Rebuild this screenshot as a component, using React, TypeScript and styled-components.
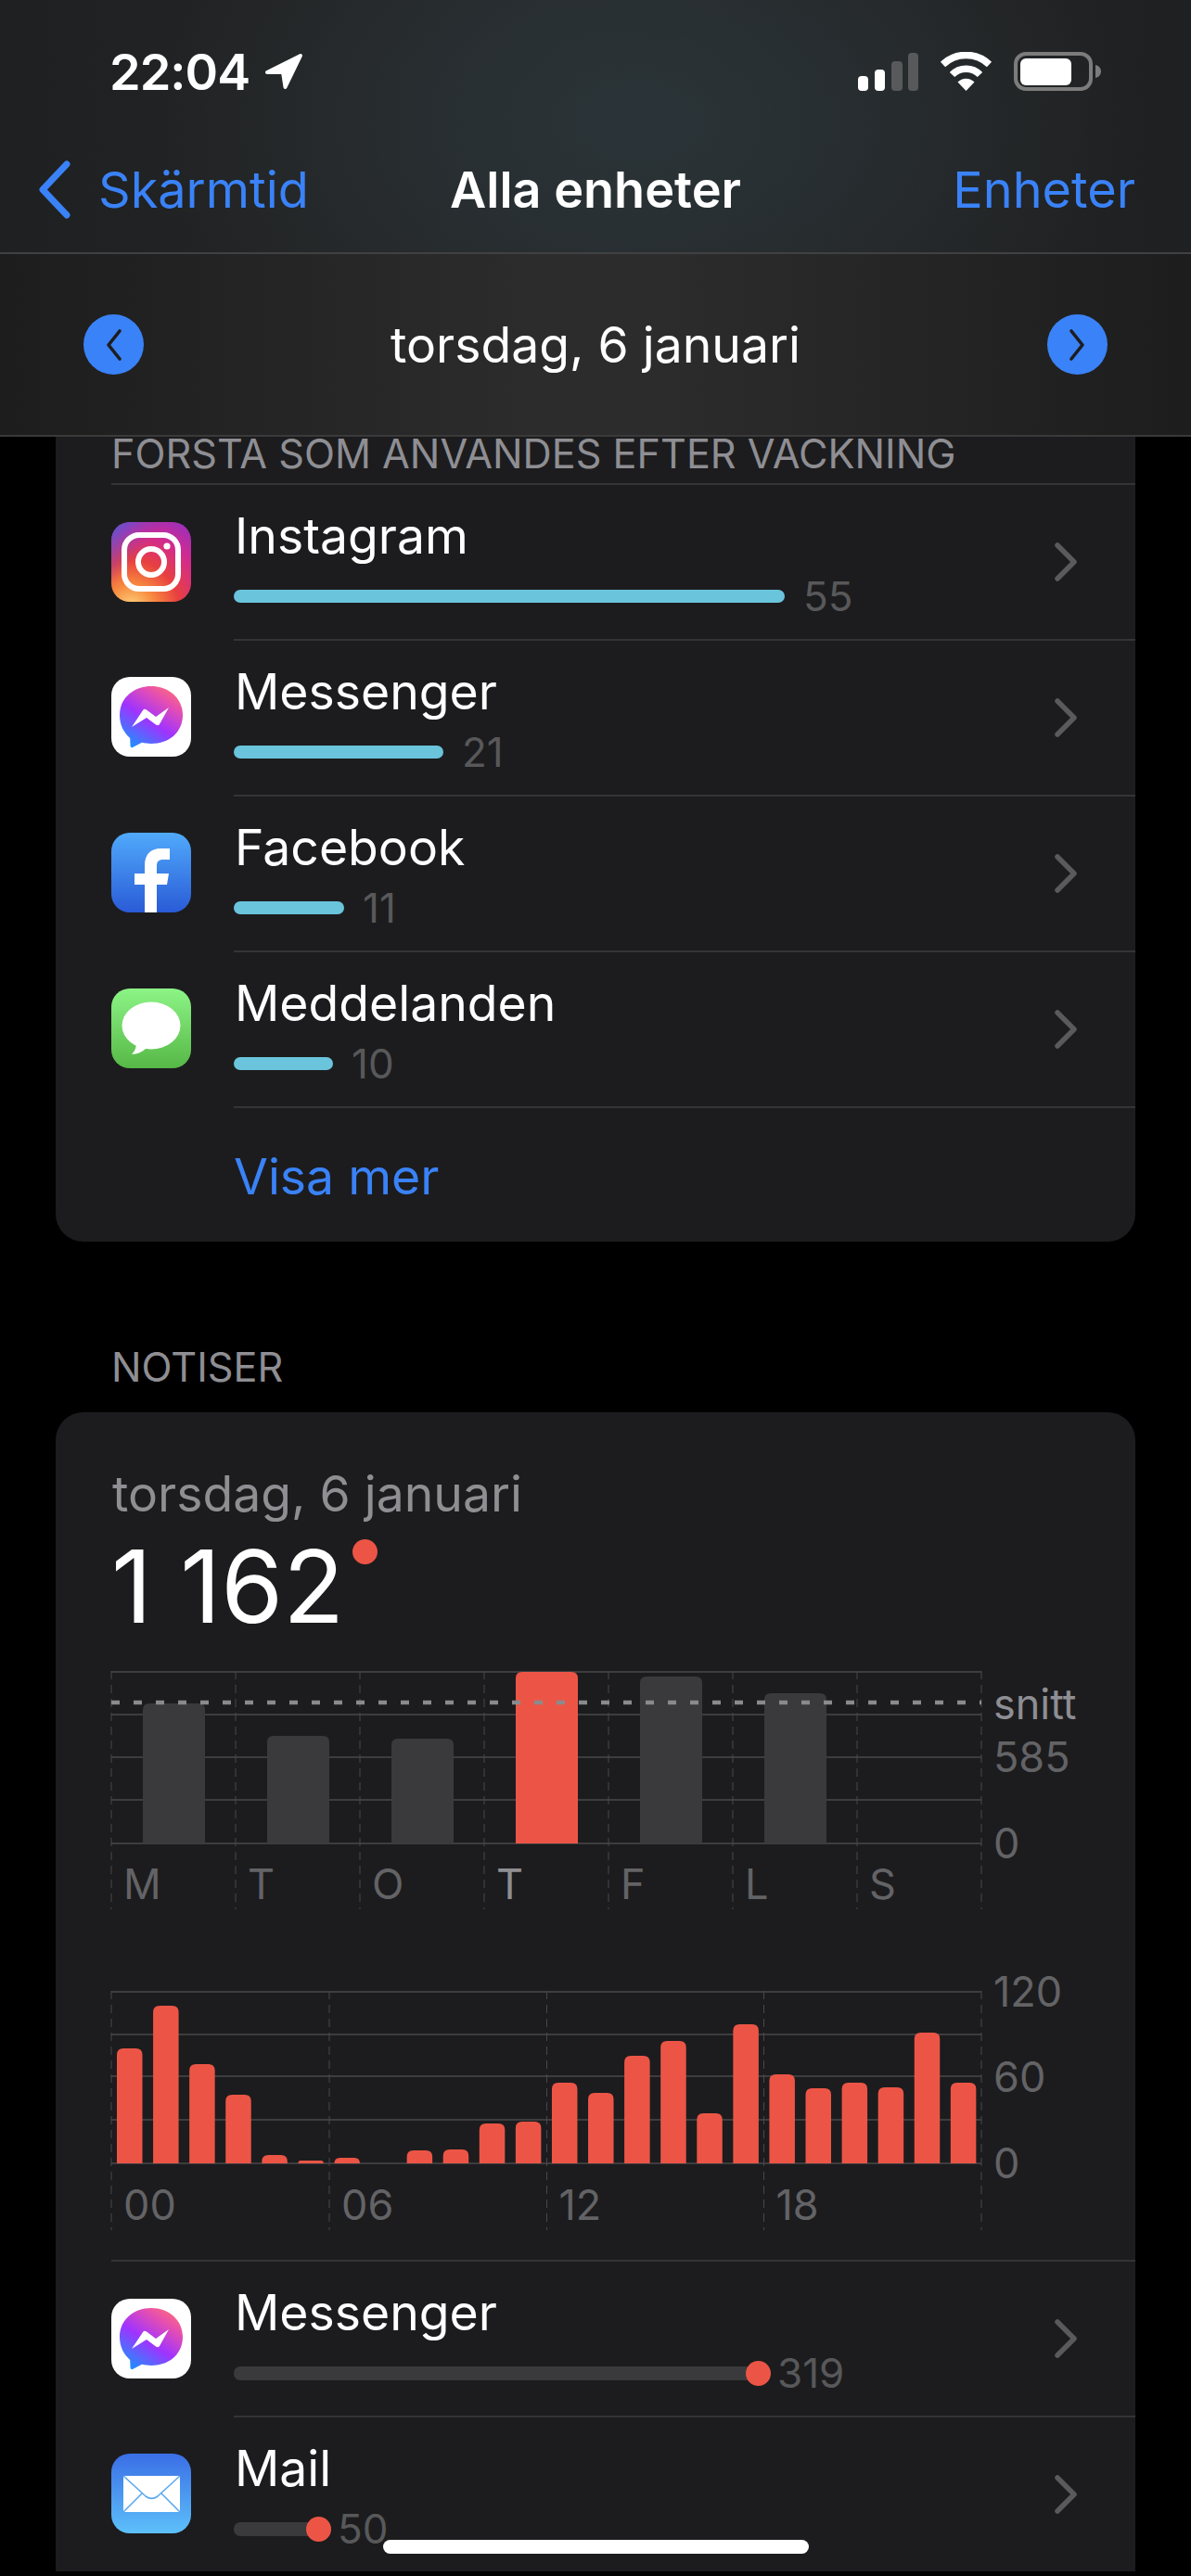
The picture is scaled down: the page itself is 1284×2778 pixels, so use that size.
import React from 'react';
import styled, { createGlobalStyle } from 'styled-components';

const GlobalStyle = createGlobalStyle`
  html, body {
    margin: 0;
    padding: 0;
    background: #000;
  }

  body {
    font-family: Inter, "Noto Sans", sans-serif;
    color: #fff;
  }
`;

const Page = styled.div`
  width: 1284px;
  height: 2778px;
  background: #000;
  position: relative;
  overflow: hidden;
  display: flex;
  flex-direction: column;
`;

const Header = styled.header`
  flex: none;
  background:
    radial-gradient(ellipse 520px 330px at 690px 130px, #2a3438 0%, rgba(42, 52, 56, 0) 100%),
    linear-gradient(90deg, #1f2021 0%, #272829 50%, #1f2021 100%);
`;

const StatusBar = styled.div`
  height: 130px;
  padding: 24px 97px 0 118px;
  box-sizing: border-box;
  display: flex;
  align-items: center;
  justify-content: space-between;
`;

const Time = styled.div`
  display: flex;
  align-items: center;
  gap: 16px;
  font-size: 54px;
  font-weight: 600;
  letter-spacing: -1px;
`;

const StatusIcons = styled.div`
  display: flex;
  align-items: flex-end;
  gap: 23px;
`;

const NavBar = styled.div`
  height: 144px;
  box-sizing: border-box;
  padding: 6px 41px 0;
  display: grid;
  grid-template-columns: 1fr auto 1fr;
  align-items: center;
  font-size: 54px;
  border-bottom: 2px solid #3f4142;
`;

const BackLink = styled.div`
  display: flex;
  align-items: center;
  gap: 30px;
  color: #3a82f7;
`;

const NavTitle = styled.div`
  font-weight: 600;
`;

const NavAction = styled.div`
  padding-right: 19px;
  color: #3a82f7;
  text-align: right;
`;

const DateBar = styled.div`
  height: 197px;
  box-sizing: border-box;
  padding: 0 90px;
  display: flex;
  align-items: center;
  justify-content: space-between;
  font-size: 53.5px;
  background: linear-gradient(90deg, #1d1d1d 0%, #2c2c2c 45%, #2c2c2c 55%, #1d1d1d 100%);
  border-bottom: 2px solid #3a3a3a;
`;

const RoundButton = styled.div`
  width: 65px;
  height: 65px;
  border-radius: 50%;
  background: #3a82f7;
  display: flex;
  align-items: center;
  justify-content: center;
`;

const Content = styled.main`
  flex: 1;
  min-height: 0;
  overflow: hidden;
`;

const TopCard = styled.section`
  margin: -10px 60px 0;
  background: #1c1c1e;
  border-radius: 0 0 30px 30px;
`;

const CutTitle = styled.div`
  padding: 0 0 0 60px;
  height: 60px;
  line-height: 57px;
  font-size: 43.2px;
  color: #8e8e93;
`;

const SectionLabel = styled.div`
  margin: 114px 0 0 120px;
  height: 70px;
  line-height: 42px;
  font-size: 43.2px;
  color: #8e8e93;
`;

const Card = styled.section`
  margin: 0 60px;
  background: #1c1c1e;
  border-radius: 30px 30px 0 0;
  padding-top: 58px;
`;

const DateLine = styled.div`
  padding-left: 61px;
  line-height: 60px;
  font-size: 53.5px;
  color: #8e8e93;
`;

const TotalRow = styled.div`
  margin: 15px 0 0 60px;
  display: flex;
  align-items: flex-start;
  height: 110px;
`;

const Total = styled.div`
  line-height: 110px;
  font-size: 108px;
`;

const TotalDot = styled.span`
  width: 27px;
  height: 27px;
  margin: 4px 0 0 9px;
  border-radius: 50%;
  background: #ec5546;
`;

const Chart = styled.svg<{ $top: number }>`
  display: block;
  margin: ${props => props.$top}px 0 0 60px;
  overflow: visible;
  font-family: Inter, sans-serif;
  font-size: 45px;
`;

const Rows = styled.div<{ $top?: number }>`
  margin-top: ${props => props.$top || 0}px;
`;

const Row = styled.div<{ $first?: boolean }>`
  height: 168px;
  box-sizing: border-box;
  margin-left: 60px;
  display: flex;
  align-items: center;
  gap: 46px;
  border-top: ${props => (props.$first ? '2px solid #343436' : 'none')};
`;

const AppIcon = styled.svg`
  flex: none;
  width: 86px;
  height: 86px;
  border-radius: 20px;
`;

const RowBody = styled.div<{ $first?: boolean }>`
  flex: 1;
  height: 100%;
  box-sizing: border-box;
  padding-right: 63px;
  display: flex;
  align-items: center;
  justify-content: space-between;
  border-top: ${props => (props.$first ? 'none' : '2px solid #343436')};
`;

const RowText = styled.div`
  padding-top: 3px;
`;

const AppName = styled.div`
  line-height: 62px;
  font-size: 53.5px;
  margin-left: 1px;
`;

const Meter = styled.div`
  display: flex;
  align-items: center;
  height: 50px;
  margin-top: 9px;
`;

const Bar = styled.div`
  height: 14px;
  border-radius: 7px;
  background: #6ac4dc;
`;

const Track = styled.div`
  position: relative;
  height: 15px;
  border-radius: 7px 0 0 7px;
  background: #3a3a3c;

  &::after {
    content: '';
    position: absolute;
    right: -14px;
    top: -6px;
    width: 27px;
    height: 27px;
    border-radius: 50%;
    background: #ec5546;
  }
`;

const MeterValue = styled.span<{ $gap: number }>`
  margin-left: ${props => props.$gap}px;
  font-size: 44px;
  color: #58585a;
`;

const ShowMore = styled.div`
  height: 146px;
  margin-left: 192px;
  border-top: 2px solid #343436;
  box-sizing: border-box;
  padding: 3px 0 0 0;
  display: flex;
  align-items: center;
  font-size: 53.5px;
  color: #3a82f7;
`;

const HomeIndicator = styled.div`
  position: absolute;
  left: 413px;
  top: 2739px;
  width: 459px;
  height: 15px;
  border-radius: 8px;
  background: #fff;
`;

const barPath = (x: number, y: number, w: number, h: number, r: number) => {
  const rr = Math.min(r, h);
  return `M${x} ${y + h}V${y + rr}Q${x} ${y} ${x + rr} ${y}H${x + w - rr}Q${x + w} ${y} ${x + w} ${y + rr}V${y + h}Z`;
};

const weekBars = [151, 116, 113, 185, 180, 162, 0];
const weekDays = ['M', 'T', 'O', 'T', 'F', 'L', 'S'];
const hourBars = [124, 170, 107, 74, 9, 3, 6, 0, 14, 15, 43, 45, 87, 76, 116, 132, 54, 150, 96, 81, 87, 82, 141, 87];
const hourMarks = [
  { x: 0, label: '00' },
  { x: 235, label: '06' },
  { x: 469.5, label: '12' },
  { x: 703.5, label: '18' },
  { x: 938, label: '' },
];

const WeekChart = () => (
  <Chart $top={36} width={1040} height={257} viewBox="0 0 1040 257">
    {[0, 1, 2, 3, 4, 5, 6, 7].map(i => (
      <line key={i} x1={i * 134} x2={i * 134} y1={0} y2={257} stroke="#48484a" strokeWidth={1} strokeDasharray="9 6" />
    ))}
    {[1, 47, 93, 139, 186].map(y => (
      <line key={y} x1={0} x2={938} y1={y} y2={y} stroke="#48484a" strokeWidth={1.5} />
    ))}
    {weekBars.map((h, i) =>
      h > 0 ? <path key={i} d={barPath(i * 134 + 34, 186 - h, 67, h, 7)} fill={i === 3 ? '#ec5546' : '#3a3a3c'} /> : null
    )}
    <line x1={0} x2={938} y1={34} y2={34} stroke="#8a8a8c" strokeWidth={4.5} strokeDasharray="9 15" />
    <text x={951} y={52} fill="#8e8e93">snitt</text>
    <text x={951} y={109} fill="#636366">585</text>
    <text x={951} y={202} fill="#636366">0</text>
    {weekDays.map((d, i) => (
      <text key={i} x={i * 134 + 13} y={246} fill={i === 3 ? '#8e8e93' : '#636366'}>{d}</text>
    ))}
  </Chart>
);

const HourChart = () => (
  <Chart $top={88} width={1040} height={258} viewBox="0 0 1040 258">
    {hourMarks.map(m => (
      <line key={m.x} x1={m.x} x2={m.x} y1={0} y2={258} stroke="#48484a" strokeWidth={1} strokeDasharray="9 6" />
    ))}
    {[1, 47, 92, 139, 186].map(y => (
      <line key={y} x1={0} x2={938} y1={y} y2={y} stroke="#48484a" strokeWidth={1.5} />
    ))}
    {hourBars.map((h, i) =>
      h > 0 ? <path key={i} d={barPath(i * 39.08 + 6, 186 - h, 27.5, h, 7)} fill="#ec5546" /> : null
    )}
    <text x={951} y={17} fill="#636366">120</text>
    <text x={951} y={109} fill="#636366">60</text>
    <text x={951} y={202} fill="#636366">0</text>
    {hourMarks.map(m => (
      <text key={m.x} x={m.x + 13} y={247} fill="#636366">{m.label}</text>
    ))}
  </Chart>
);

const LocationArrow = () => (
  <svg width="42" height="40" viewBox="0 0 42 40">
    <path d="M39 3 L3 21 H20 L22.5 37 Z" fill="#fff" stroke="#fff" strokeWidth="4" strokeLinejoin="round" />
  </svg>
);

const SignalIcon = () => (
  <svg width="65" height="41" viewBox="0 0 65 41">
    <rect x="0" y="25" width="11" height="16" rx="4" fill="#fff" />
    <rect x="18" y="18" width="11" height="23" rx="4" fill="#fff" />
    <rect x="36" y="9" width="12" height="32" rx="4" fill="#58595a" />
    <rect x="54" y="0" width="11" height="41" rx="4" fill="#58595a" />
  </svg>
);

const WifiIcon = () => (
  <svg width="57" height="42" viewBox="0 0 57 42">
    <path d="M3.5 13.5 A36 36 0 0 1 53.5 13.5" fill="none" stroke="#fff" strokeWidth="7.5" />
    <path d="M13.5 24.5 A21 21 0 0 1 43.5 24.5" fill="none" stroke="#fff" strokeWidth="7.5" />
    <path d="M19.5 32.5 A12.5 12.5 0 0 1 37.5 32.5 L28.5 42 Z" fill="#fff" />
  </svg>
);

const BatteryIcon = () => (
  <svg width="94" height="42" viewBox="0 0 94 42">
    <rect x="2" y="2" width="81" height="38" rx="11" fill="none" stroke="#7c7c7c" strokeWidth="4" />
    <rect x="7" y="7" width="55" height="29" rx="6" fill="#fff" />
    <path d="M88 14 C92 15 94 18 94 21 C94 24 92 27 88 28 Z" fill="#7c7c7c" />
  </svg>
);

const BackChevron = () => (
  <svg width="35" height="63" viewBox="0 0 35 63">
    <path d="M31 4 L5 31.5 L31 59" fill="none" stroke="#3a82f7" strokeWidth="7" strokeLinecap="round" strokeLinejoin="round" />
  </svg>
);

const RoundChevron = ({ right }: { right?: boolean }) => (
  <svg width="22" height="36" viewBox="0 0 22 36">
    <path
      d={right ? 'M5 3 L17 18 L5 33' : 'M17 3 L5 18 L17 33'}
      fill="none"
      stroke="#1d1d20"
      strokeWidth="3.6"
      strokeLinecap="round"
      strokeLinejoin="round"
    />
  </svg>
);

const RowChevron = () => (
  <svg width="24" height="42" viewBox="0 0 24 42">
    <path d="M3 3 L21 21 L3 39" fill="none" stroke="#5a5a5c" strokeWidth="5.5" strokeLinecap="round" strokeLinejoin="round" />
  </svg>
);

const InstagramIcon = () => (
  <AppIcon viewBox="0 0 86 86">
    <defs>
      <radialGradient id="igWarm" cx="0.25" cy="1.08" r="1.2">
        <stop offset="0" stopColor="#fdd87f" />
        <stop offset="0.25" stopColor="#f7893f" />
        <stop offset="0.5" stopColor="#e8403f" />
        <stop offset="0.78" stopColor="#d22a8f" />
        <stop offset="1" stopColor="#a42fb5" />
      </radialGradient>
      <linearGradient id="igCool" x1="0" y1="0" x2="0.4" y2="0.35">
        <stop offset="0" stopColor="#4a5fdc" />
        <stop offset="1" stopColor="#8a3ac0" stopOpacity="0" />
      </linearGradient>
    </defs>
    <rect width="86" height="86" fill="url(#igWarm)" />
    <rect width="86" height="86" fill="url(#igCool)" />
    <rect x="14" y="14" width="58" height="58" rx="16" fill="none" stroke="#fff" strokeWidth="6" />
    <circle cx="43" cy="43" r="14" fill="none" stroke="#fff" strokeWidth="6" />
    <circle cx="60" cy="26" r="3.6" fill="#fff" />
  </AppIcon>
);

const MessengerIcon = ({ id }: { id: string }) => (
  <AppIcon viewBox="0 0 86 86">
    <defs>
      <linearGradient id={id} x1="0.2" y1="1" x2="0.85" y2="0.05">
        <stop offset="0" stopColor="#1e90ff" />
        <stop offset="0.45" stopColor="#a033ff" />
        <stop offset="0.8" stopColor="#e64fb0" />
        <stop offset="1" stopColor="#fb6a7d" />
      </linearGradient>
    </defs>
    <rect width="86" height="86" fill="#fff" />
    <path
      d="M43 10 C62 10 77 23 77 41 C77 60 62 72 43 72 C39 72 36 71.5 33 70.8 L23 76 C21.5 76.5 20.5 75.5 20.5 74 L20.2 66 C13.5 60 9 52 9 41 C9 23 24 10 43 10 Z"
      fill={`url(#${id})`}
    />
    <path d="M22 54 L34 36 C35 34.5 36.5 34.5 38 35.5 L48 43 L62 33 L52 51 C51 52.5 49.5 52.5 48 51.5 L38 44 Z" fill="#fff" />
  </AppIcon>
);

const FacebookIcon = () => (
  <AppIcon viewBox="0 0 86 86">
    <defs>
      <linearGradient id="fbBg" x1="0" y1="0" x2="0" y2="1">
        <stop offset="0" stopColor="#50aafb" />
        <stop offset="1" stopColor="#2a5bd7" />
      </linearGradient>
    </defs>
    <rect width="86" height="86" fill="url(#fbBg)" />
    <path d="M36 86 V56 H25 V44 H36 V35 C36 23 43 17 53 17 H63 V29 H56 C51 29 49 31 49 36 V44 H62 L60 56 H49 V86 Z" fill="#fff" />
  </AppIcon>
);

const MessagesIcon = () => (
  <AppIcon viewBox="0 0 86 86">
    <defs>
      <linearGradient id="msgBg" x1="0" y1="0" x2="0" y2="1">
        <stop offset="0" stopColor="#8cf486" />
        <stop offset="1" stopColor="#56b846" />
      </linearGradient>
    </defs>
    <rect width="86" height="86" fill="url(#msgBg)" />
    <ellipse cx="43" cy="40" rx="31.5" ry="25.5" fill="#fff" />
    <path d="M27 58 C27 64 25 68 22 71 C28 70.5 33 69 38 64 Z" fill="#fff" />
  </AppIcon>
);

const MailIcon = () => (
  <AppIcon viewBox="0 0 86 86">
    <defs>
      <linearGradient id="mailBg" x1="0" y1="0" x2="0" y2="1">
        <stop offset="0" stopColor="#3a6ee6" />
        <stop offset="1" stopColor="#5dc0fa" />
      </linearGradient>
    </defs>
    <rect width="86" height="86" fill="url(#mailBg)" />
    <rect x="13" y="24" width="61" height="39" fill="#fff" />
    <path d="M13 24 L37 46 C41 49 46 49 50 46 L74 24 M13 63 L33 43 M74 63 L54 43" fill="none" stroke="#5aa8f0" strokeWidth="1.6" />
  </AppIcon>
);

interface UsageRowProps {
  icon: React.ReactNode;
  name: string;
  value: number;
  width: number;
  notice?: boolean;
  first?: boolean;
}

const UsageRow: React.FC<UsageRowProps> = ({ icon, name, value, width, notice, first }) => (
  <Row $first={first}>
    {icon}
    <RowBody $first={first}>
      <RowText>
        <AppName>{name}</AppName>
        <Meter>
          {notice ? <Track style={{ width }} /> : <Bar style={{ width }} />}
          <MeterValue $gap={notice ? 21 : 20}>{value}</MeterValue>
        </Meter>
      </RowText>
      <RowChevron />
    </RowBody>
  </Row>
);

const App: React.FC = () => (
  <Page>
    <GlobalStyle />
    <Header>
      <StatusBar>
        <Time>
          22:04
          <LocationArrow />
        </Time>
        <StatusIcons>
          <SignalIcon />
          <WifiIcon />
          <BatteryIcon />
        </StatusIcons>
      </StatusBar>
      <NavBar>
        <BackLink>
          <BackChevron />
          Skärmtid
        </BackLink>
        <NavTitle>Alla enheter</NavTitle>
        <NavAction>Enheter</NavAction>
      </NavBar>
      <DateBar>
        <RoundButton>
          <RoundChevron />
        </RoundButton>
        torsdag, 6 januari
        <RoundButton>
          <RoundChevron right />
        </RoundButton>
      </DateBar>
    </Header>
    <Content>
      <TopCard>
        <CutTitle>FÖRSTA SOM ANVÄNDES EFTER VÄCKNING</CutTitle>
        <Rows>
          <UsageRow first icon={<InstagramIcon />} name="Instagram" value={55} width={594} />
          <UsageRow icon={<MessengerIcon id="msA" />} name="Messenger" value={21} width={226} />
          <UsageRow icon={<FacebookIcon />} name="Facebook" value={11} width={119} />
          <UsageRow icon={<MessagesIcon />} name="Meddelanden" value={10} width={107} />
        </Rows>
        <ShowMore>Visa mer</ShowMore>
      </TopCard>
      <SectionLabel>NOTISER</SectionLabel>
      <Card>
        <DateLine>torsdag, 6 januari</DateLine>
        <TotalRow>
          <Total>1 162</Total>
          <TotalDot />
        </TotalRow>
        <WeekChart />
        <HourChart />
        <Rows $top={32}>
          <UsageRow first notice icon={<MessengerIcon id="msB" />} name="Messenger" value={319} width={565} />
          <UsageRow notice icon={<MailIcon />} name="Mail" value={50} width={91} />
        </Rows>
      </Card>
    </Content>
    <HomeIndicator />
  </Page>
);

export default App;
